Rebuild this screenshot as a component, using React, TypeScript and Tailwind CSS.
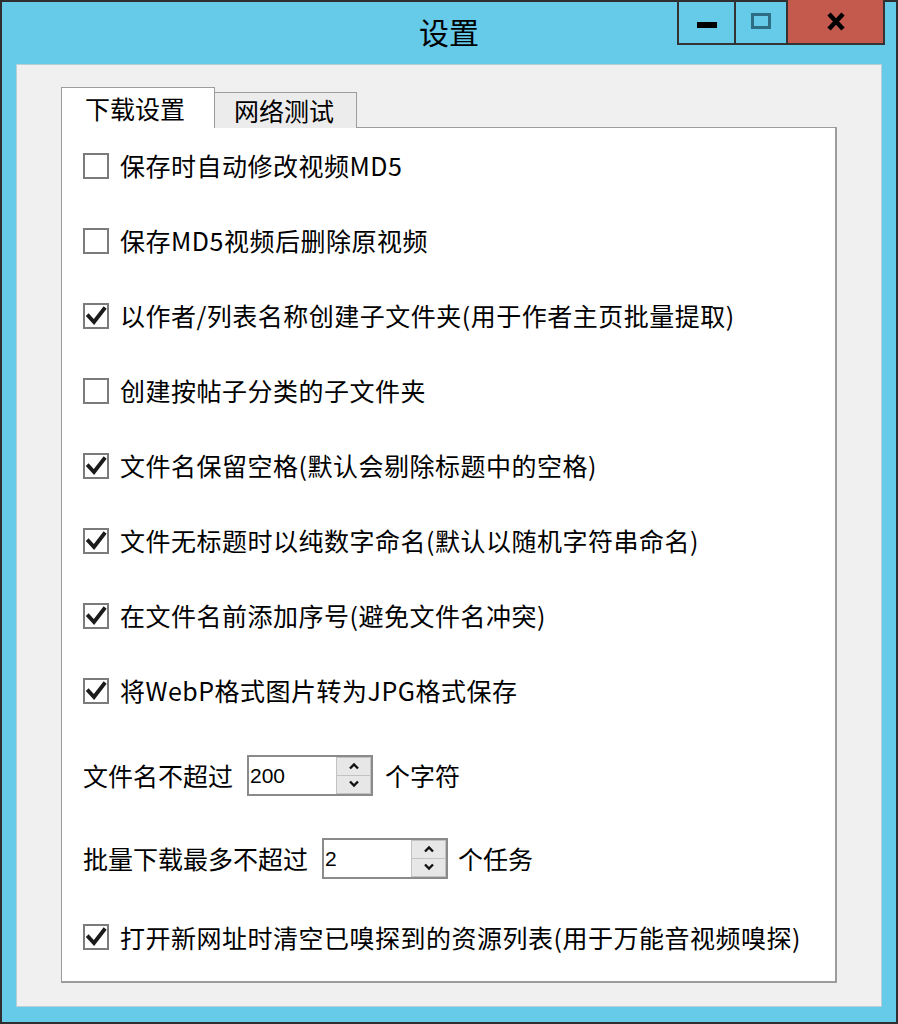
import React from "react";

const FONT = { fontFamily: '"Noto Sans CJK SC", "Noto Sans", sans-serif' };

interface CheckRow {
  label: string;
  checked: boolean;
}

const OPTIONS: CheckRow[] = [
  { label: "保存时自动修改视频MD5", checked: false },
  { label: "保存MD5视频后删除原视频", checked: false },
  { label: "以作者/列表名称创建子文件夹(用于作者主页批量提取)", checked: true },
  { label: "创建按帖子分类的子文件夹", checked: false },
  { label: "文件名保留空格(默认会剔除标题中的空格)", checked: true },
  { label: "文件无标题时以纯数字命名(默认以随机字符串命名)", checked: true },
  { label: "在文件名前添加序号(避免文件名冲突)", checked: true },
  { label: "将WebP格式图片转为JPG格式保存", checked: true },
];

function CheckBox({ checked }: { checked: boolean }) {
  return (
    <div className="w-[26px] h-[26px] shrink-0 border-2 border-[#7b7b7b] bg-white flex items-center justify-center">
      {checked && (
        <svg width="22" height="22" viewBox="0 0 22 22">
          <path d="M3.5 11 L9 17 L19 4" fill="none" stroke="#1b1b1b" strokeWidth="3.8" strokeLinecap="square" />
        </svg>
      )}
    </div>
  );
}

function SpinBox({ value }: { value: string }) {
  return (
    <div className="w-[126px] h-[41px] border-2 border-[#8a8a8a] bg-white flex">
      <div
        className="flex-1 flex items-center pl-[1px] text-[21px] text-black"
        style={{ fontFamily: '"Liberation Sans", Arial, sans-serif' }}
      >
        {value}
      </div>
      <div className="w-[35px] flex flex-col">
        <div className="flex-1 bg-[#e7e7e7] border border-[#c2c2c2] flex items-center justify-center">
          <svg width="12" height="8" viewBox="0 0 12 8">
            <path d="M2 6.5 L6 2.5 L10 6.5" fill="none" stroke="#111" strokeWidth="2.4" />
          </svg>
        </div>
        <div className="flex-1 bg-[#e7e7e7] border border-t-0 border-[#c2c2c2] flex items-center justify-center">
          <svg width="12" height="8" viewBox="0 0 12 8">
            <path d="M2 1.5 L6 5.5 L10 1.5" fill="none" stroke="#111" strokeWidth="2.4" />
          </svg>
        </div>
      </div>
    </div>
  );
}

export default function App() {
  return (
    <div className="w-[898px] h-[1024px] bg-[#66cae9] border-2 border-[#2f2f2f] flex flex-col" style={FONT}>
      {/* Title bar */}
      <div className="relative h-[62px] flex items-center justify-center">
        <span className="text-[30px] text-black leading-none pb-[4px]">设置</span>
        <div className="absolute -top-[2px] right-[11px] flex h-[45px] border-2 border-t-0 border-[#333]">
          <div className="w-[57px] flex items-center justify-center border-r-2 border-[#333]">
            <div className="w-[20px] h-[6px] bg-black mt-[6px]" />
          </div>
          <div className="w-[52px] flex items-center justify-center border-r-2 border-[#333]">
            <div className="w-[20px] h-[16px] border-[3px] border-[#2f6d85] -mt-[2px]" />
          </div>
          <div className="w-[95px] bg-[#c4594e] flex items-center justify-center">
            <svg width="20" height="19" viewBox="0 0 20 19">
              <path d="M3 2 L17 17 M17 2 L3 17" stroke="#000" strokeWidth="4.5" />
            </svg>
          </div>
        </div>
      </div>

      {/* Client area */}
      <div className="flex-1 mx-[14px] mb-[15px] bg-[#f0f0f0] border border-[#b9cfd8] flex flex-col pl-[44px] pr-[44px] pt-[23px] pb-[23px]">
        {/* Tabs */}
        <div className="flex items-end h-[40px] relative z-10 -mb-[1px]">
          <div className="w-[154px] h-[41px] bg-white border border-b-0 border-[#9c9c9c] flex items-center pl-[23px] text-[25px] text-black leading-none">
            下载设置
          </div>
          <div className="w-[142px] h-[36px] bg-[#ececec] border border-l-0 border-b-0 border-[#9c9c9c] flex items-center pl-[19px] text-[25px] text-black leading-none">
            网络测试
          </div>
        </div>

        {/* Panel */}
        <div className="flex-1 bg-white border border-r-2 border-b-2 border-[#9c9c9c] flex flex-col pl-[21px] text-[25px] text-black leading-none">
          {OPTIONS.map((opt) => (
            <div key={opt.label} className="h-[75px] flex items-center gap-[11px] tracking-[0.5px]">
              <CheckBox checked={opt.checked} />
              <span>{opt.label}</span>
            </div>
          ))}
          <div className="h-[94px] flex items-center">
            <span>文件名不超过</span>
            <div className="ml-[14px] mr-[12px]">
              <SpinBox value="200" />
            </div>
            <span>个字符</span>
          </div>
          <div className="h-[72px] flex items-center">
            <span>批量下载最多不超过</span>
            <div className="ml-[14px] mr-[10px]">
              <SpinBox value="2" />
            </div>
            <span>个任务</span>
          </div>
          <div className="h-[86px] flex items-center gap-[11px] tracking-[0.5px]">
            <CheckBox checked={true} />
            <span>打开新网址时清空已嗅探到的资源列表(用于万能音视频嗅探)</span>
          </div>
        </div>
      </div>
    </div>
  );
}
